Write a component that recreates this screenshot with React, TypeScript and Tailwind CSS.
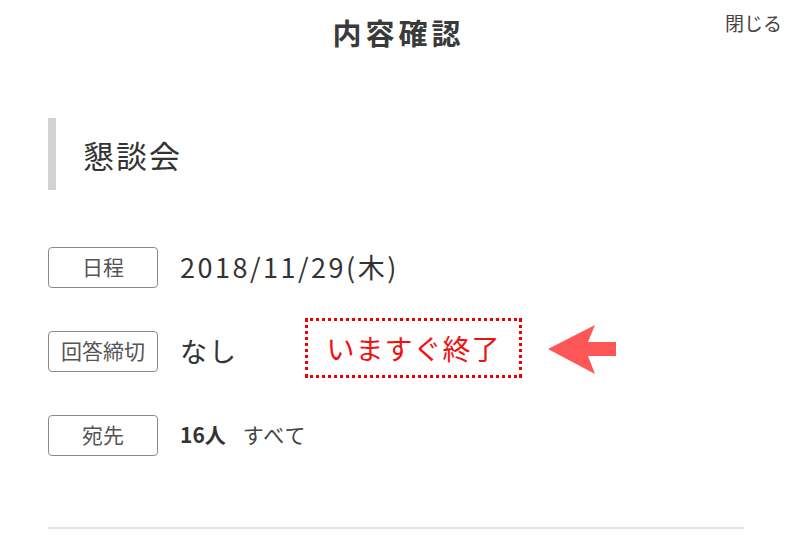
import { ReactNode } from 'react'

const jp = { fontFamily: '"Noto Sans CJK JP", "Noto Sans", sans-serif' }

function Label({ children }: { children: ReactNode }) {
  return (
    <div className="w-[110px] h-[41px] shrink-0 flex items-center justify-center rounded-[4px] border-[1.5px] border-[#8a8a8a] text-[21px] text-[#555]">
      {children}
    </div>
  )
}

function Row({ label, children }: { label: string; children: ReactNode }) {
  return (
    <div className="h-[84px] flex items-center">
      <Label>{label}</Label>
      <div className="ml-[22px] flex items-center">{children}</div>
    </div>
  )
}

export default function App() {
  return (
    <div className="w-[787px] h-[550px] bg-white text-[#333] overflow-hidden" style={jp}>
      {/* Header */}
      <div className="grid grid-cols-[1fr_auto_1fr] items-start h-[118px]">
        <div />
        <h1 className="mt-[18px] pl-[10px] text-[29px] font-bold tracking-[4px] leading-none text-[#3a3a3a]">
          内容確認
        </h1>
        <div className="flex justify-end pr-[5px] pt-[13px]">
          <button className="text-[19px] leading-none text-[#444]">閉じる</button>
        </div>
      </div>

      <div className="ml-[48px] w-[696px]">
        {/* Section heading */}
        <div className="h-[72px] flex items-center border-l-[8px] border-[#d2d2d2] pl-[27px]">
          <h2 className="text-[31px] tracking-[2px] text-[#333] leading-none">懇談会</h2>
        </div>

        <div className="mt-[35px]">
          <Row label="日程">
            <span className="text-[27px] tracking-[2.5px] text-[#333]">2018/11/29(木)</span>
          </Row>
          <Row label="回答締切">
            <span className="w-[125px] text-[27px] tracking-[2px] text-[#333]">なし</span>
            <div className="mb-[6px] w-[217px] h-[60px] flex items-center justify-center border-[3px] border-dotted border-[#ee0000]">
              <span className="text-[28px] tracking-[1px] text-[#f01010] leading-none">いますぐ終了</span>
            </div>
            <svg width="68" height="49" viewBox="0 0 68 49" className="ml-[26px] mb-[4px]">
              <path d="M0 24 L47 0 L40 17 L68 17 L68 31 L40 31 L47 49 Z" fill="#ff5757" />
            </svg>
          </Row>
          <Row label="宛先">
            <span className="text-[21px] font-bold text-[#333]">16人</span>
            <span className="ml-[17px] text-[21px] tracking-[1px] text-[#444]">すべて</span>
          </Row>
        </div>

        <div className="mt-[50px] h-[2px] bg-[#e2e2e2]" />
      </div>
    </div>
  )
}
